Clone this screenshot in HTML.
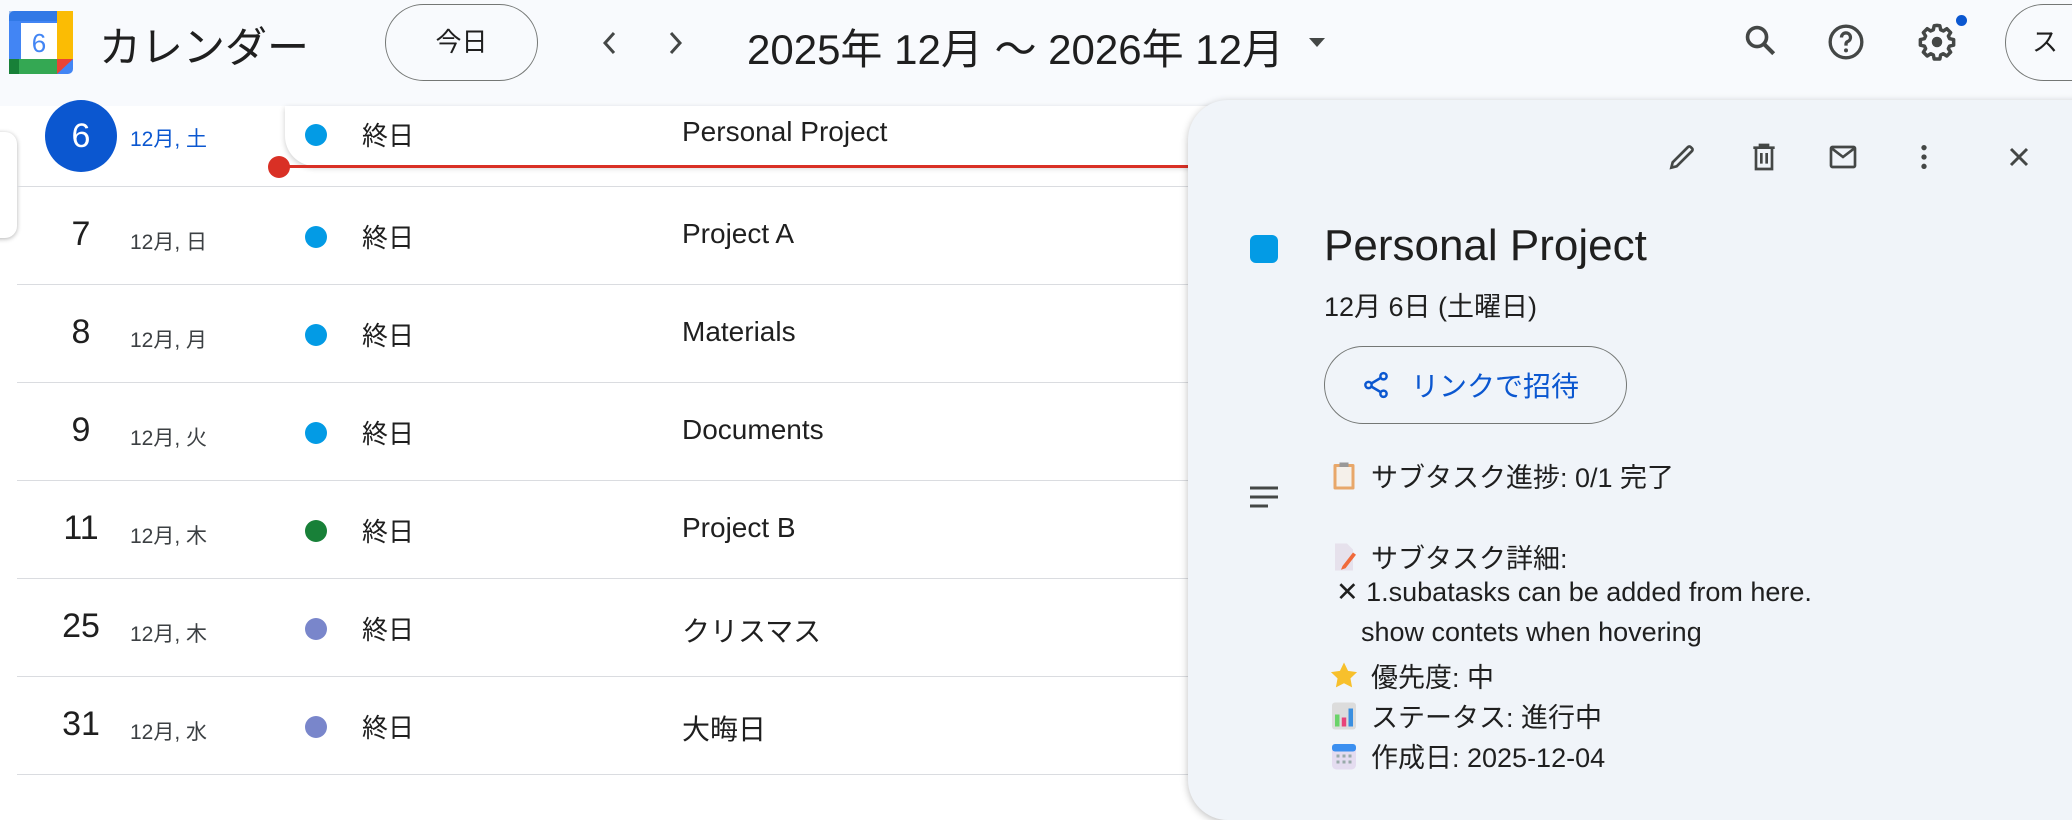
<!DOCTYPE html>
<html><head><meta charset="utf-8"><style>
*{margin:0;padding:0;box-sizing:border-box}
body{width:2072px;height:784px;overflow:hidden;background:#fff;font-family:"Liberation Sans","Noto Sans CJK JP",sans-serif;color:#1f1f1f;position:relative}
.a{position:absolute}
.hdr{left:0;top:0;width:2072px;height:106px;background:#f8fafd}
.row{position:absolute;left:17px;width:1200px;height:98px;border-bottom:1.5px solid #dadce0}
.num{position:absolute;left:33px;width:62px;text-align:center;font-size:34px}
.md{position:absolute;left:113px;font-size:21px;color:#3c4043}
.dot{position:absolute;left:290px;width:22px;height:22px;border-radius:50%}
.ad{position:absolute;left:345px;font-size:26px}
.tt{position:absolute;left:665px;font-size:28px}
.ln{position:absolute;left:1329px;font-size:27px;white-space:nowrap;display:flex;align-items:center}
.ln svg{margin-right:12px}
</style></head><body>
<div class="a hdr"></div>
<svg class="a" style="left:9px;top:11px" width="64" height="63" viewBox="0 0 64 63">
<rect x="0" y="0" width="64" height="63" rx="5" fill="#4285f4"/>
<rect x="48" y="0" width="16" height="48" fill="#fbbc04"/>
<rect x="0" y="48" width="48" height="15" fill="#34a853"/>
<rect x="0" y="48" width="10" height="15" fill="#188038"/>
<path d="M48 48H64L48 63Z" fill="#ea4335"/>
<rect x="0" y="0" width="48" height="10" fill="#1967d2" opacity=".4"/>
<rect x="12" y="12" width="36" height="36" fill="#fff"/>
<text x="30" y="41" font-size="26" fill="#4285f4" text-anchor="middle" font-family="Liberation Sans">6</text>
</svg>
<div class="a" style="left:99px;top:14px;font-size:42px;color:#1f1f1f">カレンダー</div>
<div class="a" style="left:385px;top:4px;width:153px;height:77px;border:1.5px solid #747775;border-radius:39px;text-align:center;line-height:74px;font-size:26px">今日</div>
<svg class="a" style="left:598px;top:28px" width="24" height="30"><path d="M16 5L7 15L16 25" stroke="#444746" stroke-width="3" fill="none"/></svg>
<svg class="a" style="left:663px;top:28px" width="24" height="30"><path d="M8 5L17 15L8 25" stroke="#444746" stroke-width="3" fill="none"/></svg>
<div class="a" style="left:747px;top:16px;font-size:42px;white-space:nowrap">2025年 12月 〜 2026年 12月</div>
<svg class="a" style="left:1309px;top:38px" width="16" height="10"><path d="M0 0H16L8 9Z" fill="#444746"/></svg>
<svg class="a" style="left:1742px;top:22px" width="38" height="38" viewBox="0 0 24 24"><circle cx="9.5" cy="9.5" r="6" stroke="#444746" stroke-width="2.3" fill="none"/><path d="M14 14L20 20" stroke="#444746" stroke-width="2.6"/></svg>
<svg class="a" style="left:1826px;top:22px" width="40" height="40" viewBox="0 0 24 24"><circle cx="12" cy="12" r="9.5" stroke="#444746" stroke-width="2" fill="none"/><path d="M9.3 9.3a2.7 2.7 0 1 1 3.6 2.5c-.7.3-.9.8-.9 1.6v.8" stroke="#444746" stroke-width="2" fill="none"/><circle cx="12" cy="17" r="1.2" fill="#444746"/></svg>
<svg class="a" style="left:1916px;top:21px" width="42" height="42" viewBox="0 0 24 24"><path d="M12 2.5l1.6.2.5 2.3 1.5.7 2-1.3 2.2 2.2-1.3 2 .7 1.5 2.3.5v3.2l-2.3.5-.7 1.5 1.3 2-2.2 2.2-2-1.3-1.5.7-.5 2.3h-3.2l-.5-2.3-1.5-.7-2 1.3-2.2-2.2 1.3-2-.7-1.5-2.3-.5v-3.2l2.3-.5.7-1.5-1.3-2 2.2-2.2 2 1.3 1.5-.7.5-2.3z" stroke="#444746" stroke-width="2" fill="none" stroke-linejoin="round"/><circle cx="12" cy="12" r="3" fill="#444746"/></svg>
<div class="a" style="left:1956px;top:15px;width:11px;height:11px;border-radius:50%;background:#0b57d0"></div>
<div class="a" style="left:2005px;top:4px;width:120px;height:77px;border:1.5px solid #747775;border-radius:39px;font-size:26px;line-height:74px;padding-left:26px">ス</div>

<div class="a" style="left:-20px;top:132px;width:37px;height:106px;background:#fff;border-radius:12px;box-shadow:0 1px 5px rgba(0,0,0,.3)"></div>

<div class="row" style="top:106px;height:81px"></div>
<div class="a" style="left:45px;top:100px;width:72px;height:72px;border-radius:50%;background:#0b57d0;color:#fff;font-size:34px;text-align:center;line-height:72px">6</div>
<div class="a" style="left:130px;top:123px;font-size:21px;color:#0b57d0">12月, 土</div>
<div class="a" style="left:285px;top:106px;width:940px;height:60px;background:#fff;border-radius:0 0 0 30px;box-shadow:0 2px 6px rgba(0,0,0,.2)"></div>
<div class="a" style="left:305px;top:124px;width:22px;height:22px;border-radius:50%;background:#039be5"></div>
<div class="a" style="left:362px;top:116px;font-size:26px">終日</div>
<div class="a" style="left:682px;top:116px;font-size:28px">Personal Project</div>
<div class="a" style="left:279px;top:165px;width:920px;height:3px;background:#d93025"></div>
<div class="a" style="left:268px;top:156px;width:22px;height:22px;border-radius:50%;background:#d93025"></div>

<div class="row" style="top:187px"><div class="num" style="top:28px">7</div><div class="md" style="top:39px">12月, 日</div><div class="dot" style="top:39px;left:288px;background:#039be5"></div><div class="ad" style="top:31px">終日</div><div class="tt" style="top:31px">Project A</div></div>
<div class="row" style="top:285px"><div class="num" style="top:28px">8</div><div class="md" style="top:39px">12月, 月</div><div class="dot" style="top:39px;left:288px;background:#039be5"></div><div class="ad" style="top:31px">終日</div><div class="tt" style="top:31px">Materials</div></div>
<div class="row" style="top:383px"><div class="num" style="top:28px">9</div><div class="md" style="top:39px">12月, 火</div><div class="dot" style="top:39px;left:288px;background:#039be5"></div><div class="ad" style="top:31px">終日</div><div class="tt" style="top:31px">Documents</div></div>
<div class="row" style="top:481px"><div class="num" style="top:28px">11</div><div class="md" style="top:39px">12月, 木</div><div class="dot" style="top:39px;left:288px;background:#188038"></div><div class="ad" style="top:31px">終日</div><div class="tt" style="top:31px">Project B</div></div>
<div class="row" style="top:579px"><div class="num" style="top:28px">25</div><div class="md" style="top:39px">12月, 木</div><div class="dot" style="top:39px;left:288px;background:#7986cb"></div><div class="ad" style="top:31px">終日</div><div class="tt" style="top:31px">クリスマス</div></div>
<div class="row" style="top:677px"><div class="num" style="top:28px">31</div><div class="md" style="top:39px">12月, 水</div><div class="dot" style="top:39px;left:288px;background:#7986cb"></div><div class="ad" style="top:31px">終日</div><div class="tt" style="top:31px">大晦日</div></div>

<div class="a" style="left:1188px;top:100px;width:930px;height:720px;background:#f0f4f9;border-radius:40px;box-shadow:0 2px 8px rgba(0,0,0,.25)"></div>
<svg class="a" style="left:1666px;top:141px" width="32" height="32" viewBox="0 0 24 24"><path d="M4 20l1-4L16.5 4.5a1.4 1.4 0 0 1 2 0l1 1a1.4 1.4 0 0 1 0 2L8 19z" stroke="#444746" stroke-width="2" fill="none"/></svg>
<svg class="a" style="left:1748px;top:141px" width="32" height="32" viewBox="0 0 24 24"><path d="M4 5h16M9 5V3h6v2M6 5v16h12V5M10 9v8M14 9v8" stroke="#444746" stroke-width="2" fill="none"/></svg>
<svg class="a" style="left:1827px;top:141px" width="32" height="32" viewBox="0 0 24 24"><rect x="3" y="4.5" width="18" height="15" rx="1" stroke="#444746" stroke-width="2" fill="none"/><path d="M3.5 5.5L12 12l8.5-6.5" stroke="#444746" stroke-width="2" fill="none"/></svg>
<svg class="a" style="left:1908px;top:141px" width="32" height="32" viewBox="0 0 24 24"><circle cx="12" cy="5" r="2" fill="#444746"/><circle cx="12" cy="12" r="2" fill="#444746"/><circle cx="12" cy="19" r="2" fill="#444746"/></svg>
<svg class="a" style="left:2003px;top:141px" width="32" height="32" viewBox="0 0 24 24"><path d="M6 6L18 18M18 6L6 18" stroke="#444746" stroke-width="2.2"/></svg>

<div class="a" style="left:1250px;top:235px;width:28px;height:28px;border-radius:6px;background:#039be5"></div>
<div class="a" style="left:1324px;top:221px;font-size:44px;white-space:nowrap">Personal Project</div>
<div class="a" style="left:1324px;top:285px;font-size:27px;white-space:nowrap">12月 6日 (土曜日)</div>
<div class="a" style="left:1324px;top:346px;width:303px;height:78px;border:1.5px solid #747775;border-radius:39px"></div>
<svg class="a" style="left:1361px;top:369px" width="30" height="32" viewBox="0 0 24 24"><circle cx="18" cy="5" r="2.5" stroke="#0b57d0" stroke-width="2" fill="none"/><circle cx="6" cy="12" r="2.5" stroke="#0b57d0" stroke-width="2" fill="none"/><circle cx="18" cy="19" r="2.5" stroke="#0b57d0" stroke-width="2" fill="none"/><path d="M8.2 10.8l7.6-4.5M8.2 13.2l7.6 4.5" stroke="#0b57d0" stroke-width="2"/></svg>
<div class="a" style="left:1411px;top:365px;font-size:28px;color:#0b57d0;white-space:nowrap">リンクで招待</div>

<svg class="a" style="left:1248px;top:485px" width="32" height="24"><path d="M2 3h28M2 12h28M2 21h18" stroke="#444746" stroke-width="3"/></svg>

<div class="ln" style="top:456px"><svg width="30" height="30" viewBox="0 0 20 20"><rect x="3" y="2" width="14" height="17" rx="1" fill="#e8a76a"/><rect x="5" y="4" width="10" height="13" fill="#f5f0ea"/><rect x="7" y="1" width="6" height="3" fill="#999"/></svg>サブタスク進捗: 0/1 完了</div>
<div class="ln" style="top:537px"><svg width="30" height="30" viewBox="0 0 20 20"><path d="M4 1h8l4 4v14H4z" fill="#e6e1ec"/><path d="M9 16l7-9 2 1.5-7 9-3 1z" fill="#f06a3b"/></svg>サブタスク詳細:</div>
<div class="ln" style="top:577px;left:1336px">✕ 1.subatasks can be added from here.</div>
<div class="ln" style="top:617px;left:1361px">show contets when hovering</div>
<div class="ln" style="top:656px"><svg width="30" height="30" viewBox="0 0 20 20"><path d="M10 1l2.7 5.6 6 .8-4.4 4.2 1.1 6L10 14.8 4.6 17.6l1.1-6L1.3 7.4l6-.8z" fill="#f7c02c"/></svg>優先度: 中</div>
<div class="ln" style="top:696px"><svg width="30" height="30" viewBox="0 0 20 20"><rect x="2" y="1" width="16" height="18" rx="2" fill="#dcdcdc"/><rect x="4" y="9" width="3" height="8" fill="#6ad36a"/><rect x="8.5" y="11" width="3" height="6" fill="#e8437a"/><rect x="13" y="5" width="3" height="12" fill="#3a8fe0"/></svg>ステータス: 進行中</div>
<div class="ln" style="top:736px"><svg width="30" height="30" viewBox="0 0 20 20"><rect x="2" y="2" width="16" height="17" rx="3" fill="#e4dcf0"/><rect x="2" y="2" width="16" height="5" rx="2" fill="#3b8ff0"/><g fill="#9aa"><rect x="5" y="9" width="2" height="2"/><rect x="9" y="9" width="2" height="2"/><rect x="13" y="9" width="2" height="2"/><rect x="5" y="13" width="2" height="2"/><rect x="9" y="13" width="2" height="2"/><rect x="13" y="13" width="2" height="2"/></g></svg>作成日: 2025-12-04</div>
</body></html>
